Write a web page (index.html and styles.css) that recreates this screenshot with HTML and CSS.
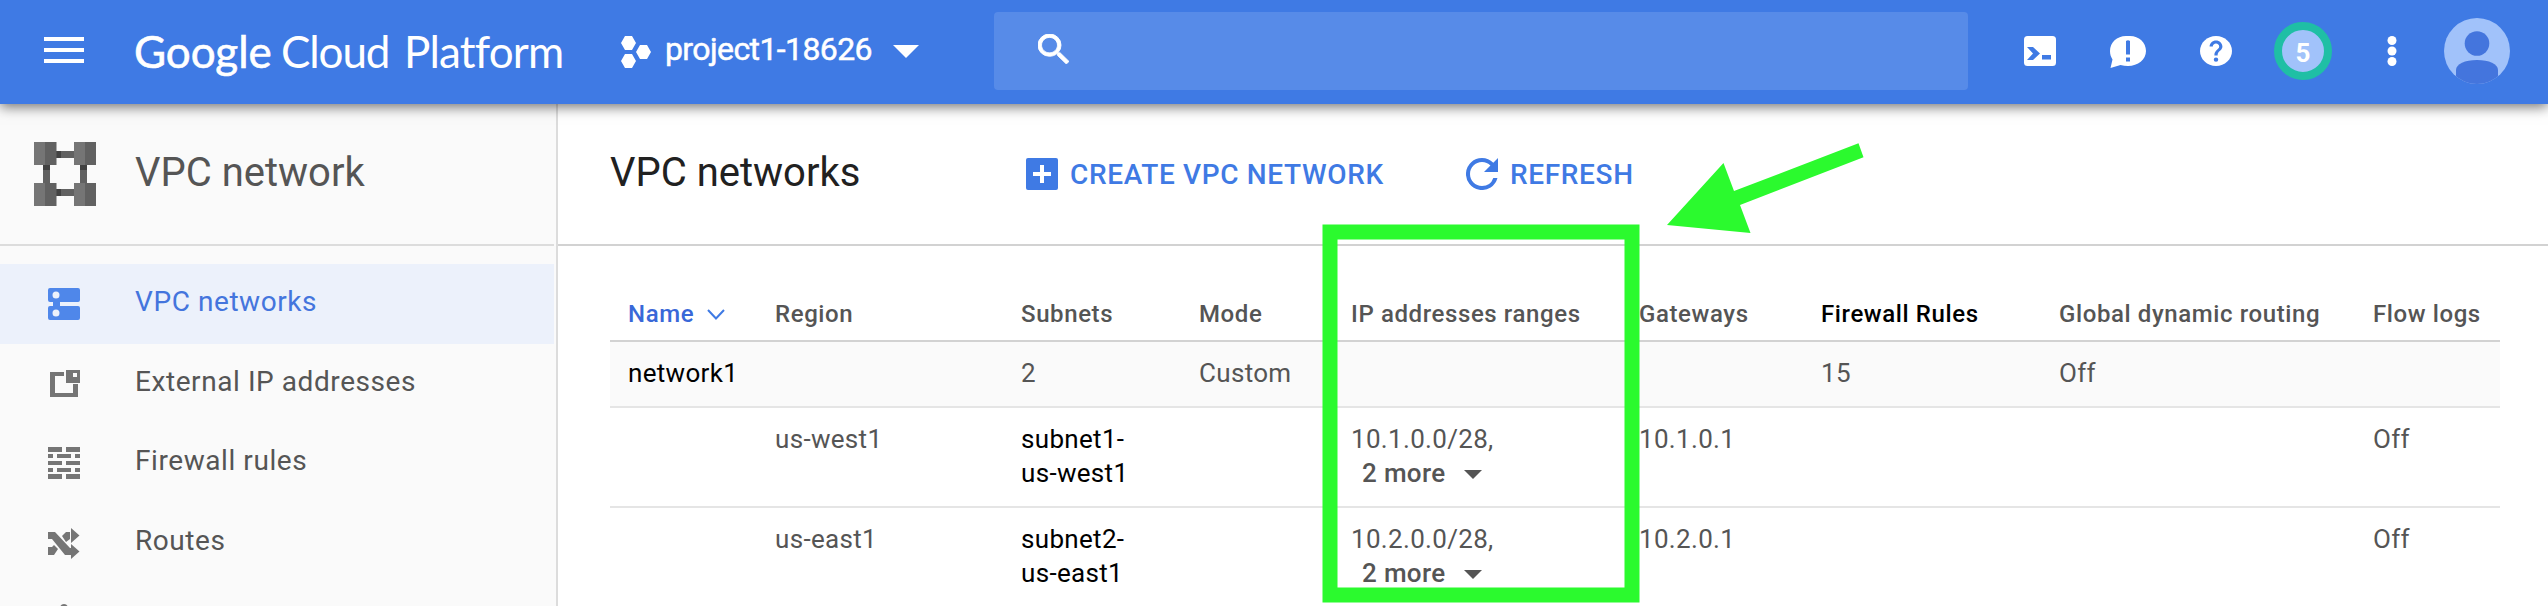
FILE: index.html
```
<!DOCTYPE html>
<html lang="en">
<head>
<meta charset="utf-8">
<title>VPC networks</title>
<link rel="stylesheet" href="styles.css">
</head>
<body>
<header class="topbar">
  <svg class="menu" viewBox="0 0 40 26"><path fill="#fff" d="M0 0h40v4H0zM0 11h40v4H0zM0 22h40v4H0z"/></svg>
  <div class="logo"><span class="logo-google">Google</span><span class="logo-cloud">Cloud</span><span class="logo-platform">Platform</span></div>
  <div class="project">
    <svg class="hexes" viewBox="0 0 30 32"><path fill="#fff" d="M4 0h7l4 7-4 7H4L0 7zM4 18h7l4 7-4 7H4l-4-7zM19 9h7l4 7-4 7h-7l-4-7z"/></svg>
    <span class="project-name">project1-18626</span>
    <svg class="caret" viewBox="0 0 26 13"><path fill="#fff" d="M0 0h26L13 13z"/></svg>
  </div>
  <div class="search"><svg class="search-icon" viewBox="3 3 17.5 17.5" preserveAspectRatio="none"><path fill="#fff" stroke="#fff" stroke-width=".5" d="M15.5 14h-.79l-.28-.27A6.471 6.471 0 0 0 16 9.5 6.5 6.5 0 1 0 9.500 16c1.610 0 3.090-.59 4.230-1.570l.27.28v.79l5 4.990L20.490 19l-4.990-5zm-6 0C7.010 14 5 11.990 5 9.500S7.010 5 9.500 5 14 7.010 14 9.500 11.990 14 9.500 14z"/></svg></div>
  <div class="tools">
    <svg class="t-shell" viewBox="0 0 32 30"><rect width="32" height="30" rx="3.500" fill="#fff"/><path fill="#3f7ae4" d="M3 11h6l7 6.500L9 24H3l6-6.500zM18 19h9v4.500h-9z"/></svg>
    <svg class="t-chat" viewBox="0 0 36 32"><path fill="#fff" d="M20 0h-4C7 0 0 6.500 0 15c0 3.500 1 6 2.500 8.500L.5 32l10-3c2.500.7 5 1 7.500 1 10 0 18-6.500 18-15S29 0 20 0z"/><path fill="#3f7ae4" d="M16 5q2-1.500 4 0v13.500h-4zM16 21.500h4v4h-4z"/></svg>
    <svg class="t-help" viewBox="2 2 20 20" preserveAspectRatio="none"><path fill="#fff" d="M12 2C6.480 2 2 6.480 2 12s4.480 10 10 10 10-4.480 10-10S17.520 2 12 2z"/><path fill="#3f7ae4" d="M15.070 11.250l-.9.920C13.450 12.900 13 13.500 13 15h-2v-.5c0-1.100.45-2.100 1.170-2.830l1.240-1.260c.37-.36.590-.86.590-1.410 0-1.100-.9-2-2-2s-2 .9-2 2H8c0-2.210 1.790-4 4-4s4 1.790 4 4c0 .88-.36 1.680-.93 2.250z"/><circle cx="12" cy="17.800" r="1.400" fill="#3f7ae4"/></svg>
    <span class="badge">5</span>
    <svg class="t-more" viewBox="0 0 10 30"><g fill="#fff"><circle cx="5" cy="4.500" r="4.500"/><circle cx="5" cy="15" r="4.500"/><circle cx="5" cy="25.500" r="4.500"/></g></svg>
    <svg class="avatar" viewBox="0 0 66 66"><clipPath id="disc"><circle cx="33" cy="33" r="33"/></clipPath><g clip-path="url(#disc)"><rect width="66" height="66" fill="#a1c2fa"/><circle cx="33" cy="25.500" r="12.300" fill="#4475dd"/><path fill="#4475dd" d="M12 66V52c0-6 9-10 21-10s21 4 21 10v14z"/></g></svg>
  </div>
</header>
<div class="body">
  <nav class="side">
    <div class="side-head">
      <svg class="vpc-icon" viewBox="0 0 62 64"><path fill="#616161" d="M22 9h18v7H22zM22 47h18v7H22zM9 22h7v20H9zM46 22h7v20h-7z"/><path fill="#424242" d="M22 9h5v7h-5zM22 47h5v7h-5zM9 22h7v6H9zM46 22h7v6h-7z"/><path fill="#757575" d="M0 0h11v23H0zM40 0h11v23H40zM0 41h11v23H0zM40 41h11v23H40z"/><path fill="#616161" d="M11 0h11.500v23H11zM51 0h11v23H51zM11 41h11.500v23H11zM51 41h11v23H51z"/></svg>
      <span>VPC network</span>
    </div>
    <div class="side-list">
      <a class="nav nav-on"><svg class="nav-icon" viewBox="0 0 32 32"><path fill="#4f87ea" fill-rule="evenodd" d="M2 0h28q2 0 2 2v10q0 2-2 2H12v4h18q2 0 2 2v10q0 2-2 2H2q-2 0-2-2V20q0-2 2-2h3v-4H2q-2 0-2-2V2q0-2 2-2zM8 3.500a3.500 3.500 0 1 0 0 7a3.500 3.500 0 1 0 0-7zM8 21.500a3.500 3.500 0 1 0 0 7a3.500 3.500 0 1 0 0-7z"/></svg><span>VPC networks</span></a>
      <a class="nav"><svg class="nav-icon" viewBox="0 0 32 32"><path fill="#757575" fill-rule="evenodd" d="M2 4h14v4H7v17h18v-9h5v13H2zM18 2h14v13H18zM25 5v4h4V5z"/></svg><span>External IP addresses</span></a>
      <a class="nav"><svg class="nav-icon" viewBox="0 0 32 32"><path fill="#757575" d="M0 0h14v5H0zM18 0h14v5H18zM0 7h5v4H0zM9 7h14v4H9zM27 7h5v4h-5zM0 14h14v4H0zM18 14h14v4H18zM0 21h5v4H0zM9 21h14v4H9zM27 21h5v4h-5zM0 27h14v5H0zM18 27h14v5H18z"/></svg><span>Firewall rules</span></a>
      <a class="nav"><svg class="nav-icon" viewBox="0 0 32 32"><path fill="#757575" d="M0 5h7l15 16h1v-4l8.500 7.500L23 32v-4h-6L4 12H0zM0 20h4l2-2 4 4-4 6H0zM14 9l4-4h4v7l-4 3zM23 1l8.500 7.500L23 16z"/></svg><span>Routes</span></a>
      <a class="nav"><svg class="nav-icon peering" viewBox="0 0 32 32"><path fill="#757575" d="M16 0q3 0 4 3v11l8 8v6h-6l-6-6-6 6H4v-6l8-8V3q1-3 4-3z"/></svg></a>
    </div>
  </nav>
  <main class="main">
    <div class="main-head">
      <h1>VPC networks</h1>
      <a class="action create"><svg class="act-icon" viewBox="0 0 32 32"><rect width="32" height="32" rx="2" fill="#3f7ae4"/><path fill="#fff" d="M14 7h4v7h7v4h-7v7h-4v-7H7v-4h7z"/></svg><span>CREATE VPC NETWORK</span></a>
      <a class="action refresh"><svg class="act-icon" viewBox="4 4 16 16"><path fill="#3f7ae4" d="M17.650 6.350A7.958 7.958 0 0 0 12 4a8 8 0 1 0 7.730 10h-2.080A5.990 5.990 0 0 1 12 18c-3.310 0-6-2.690-6-6s2.690-6 6-6c1.660 0 3.140.69 4.220 1.780L13 11h7V4l-2.350 2.350z"/></svg><span>REFRESH</span></a>
    </div>
    <div class="table">
      <div class="row head">
        <span class="sorted">Name<svg class="chev" viewBox="0 0 18 11"><path fill="none" stroke="#3f7ae4" stroke-width="2" d="M1 1l8 8.500L17 1"/></svg></span><span>Region</span><span>Subnets</span><span>Mode</span><span>IP addresses ranges</span><span>Gateways</span><span class="strong">Firewall Rules</span><span>Global dynamic routing</span><span>Flow logs</span>
      </div>
      <div class="row net">
        <span class="strong">network1</span><span></span><span>2</span><span>Custom</span><span></span><span></span><span>15</span><span>Off</span><span></span>
      </div>
      <div class="row sub">
        <span></span><span>us-west1</span><span class="strong">subnet1-<br>us-west1</span><span></span><span>10.1.0.0/28,<br><b class="more">2 more<svg class="drop" viewBox="0 0 18 9"><path fill="#555" d="M0 0h18L9 9z"/></svg></b></span><span>10.1.0.1</span><span></span><span></span><span>Off</span>
      </div>
      <div class="row sub last">
        <span></span><span>us-east1</span><span class="strong">subnet2-<br>us-east1</span><span></span><span>10.2.0.0/28,<br><b class="more">2 more<svg class="drop" viewBox="0 0 18 9"><path fill="#555" d="M0 0h18L9 9z"/></svg></b></span><span>10.2.0.1</span><span></span><span></span><span>Off</span>
      </div>
    </div>
  </main>
</div>
<svg class="callout" viewBox="0 0 2548 606"><path fill="none" stroke="#2bfa2e" stroke-width="15" d="M1330 232h302v363h-302z"/><path fill="#2bfa2e" d="M1667 225l56.500-62 10.500 28 124.500-47.700 5 14L1740 205l10.500 28z"/></svg>
</body>
</html>
```
FILE: styles.css
```
* { box-sizing: border-box; }
body { margin: 0; width: 2548px; height: 606px; overflow: hidden; position: relative; background: #fff; color: #555; font-family: Roboto, "Liberation Sans", sans-serif; display: flex; flex-direction: column; }
svg { display: block; flex: none; }

.topbar { position: relative; z-index: 2; height: 104px; flex: none; background: #3f7ae4; color: #fff; display: flex; align-items: flex-start; box-shadow: 0 3px 12px rgba(0,0,0,.55); }
.menu { width: 40px; height: 26px; margin: 37px 0 0 44px; }
.logo { width: 440px; margin: 25px 0 0 50px; display: flex; font: 44px/52px Lato, sans-serif; white-space: nowrap; }
.logo-google { width: 147px; -webkit-text-stroke: .6px #fff; letter-spacing: -.1px; }
.logo-cloud { width: 123px; letter-spacing: -1.1px; }
.logo-platform { letter-spacing: -.8px; }
.project { width: 373px; margin-left: 47px; display: flex; }
.hexes { width: 30px; height: 32px; margin-top: 36px; }
.project-name { width: 242px; padding-left: 14px; font-size: 32px; line-height: 38px; margin-top: 30px; letter-spacing: -.6px; -webkit-text-stroke: .5px #fff; white-space: nowrap; }
.caret { width: 26px; height: 13px; margin-top: 45px; }
.search { width: 974px; height: 78px; margin-top: 12px; border-radius: 4px; background: #578be8; padding: 22px 0 0 44px; }
.search-icon { width: 31px; height: 30px; }
.tools { display: flex; padding-left: 56px; }
.t-shell { width: 32px; height: 30px; margin-top: 36px; }
.t-chat { width: 36px; height: 32px; margin: 36px 0 0 54px; }
.t-help { width: 32px; height: 30px; margin: 36px 0 0 54px; }
.badge { width: 58px; height: 58px; margin: 22px 0 0 42px; border: 8px solid #1fbfa5; border-radius: 50%; background: #a1c2fa; font-size: 26px; line-height: 46px; font-weight: 700; text-align: center; }
.t-more { width: 10px; height: 30px; margin: 36px 0 0 55px; }
.avatar { width: 66px; height: 66px; margin: 18px 0 0 47px; }

.body { display: flex; height: 502px; overflow: hidden; }
.side { width: 558px; background: #fafafa; border-right: 2px solid #dcdcdc; flex: none; overflow: hidden; }
.side-head { width: 554px; height: 142px; border-bottom: 2px solid #dcdcdc; padding: 38px 0 0 34px; display: flex; font-size: 40px; line-height: 46px; }
.side-head span { padding-left: 39px; margin-top: 8px; }
.vpc-icon { width: 62px; height: 64px; }
.side-list { padding-top: 18px; height: 360px; overflow: hidden; }
.nav { width: 554px; height: 79.300px; display: flex; padding-left: 48px; align-items: flex-start; font-size: 28px; line-height: 34px; letter-spacing: .57px; }
.nav span { padding-left: 55px; margin-top: 21px; }
.nav-icon { width: 32px; height: 32px; margin-top: 24px; }
.peering { margin-top: 22px; }
.nav-on { height: 80px; background: #ecf1fb; color: #4475dd; }

.main { flex: 1; height: 502px; overflow: hidden; }
.main-head { height: 142px; border-bottom: 2px solid #d2d2d2; padding: 38px 0 0 52px; display: flex; }
h1 { margin: 8px 0 0; width: 416px; font-size: 40px; line-height: 46px; font-weight: 400; color: #212121; }
.action { display: flex; color: #3f7ae4; font-weight: 500; font-size: 28px; line-height: 34px; white-space: nowrap; padding-top: 16px; letter-spacing: .65px; }
.action span { padding-left: 12px; }
.create { width: 440px; }
.act-icon { width: 32px; height: 32px; }
.table { margin-left: 52px; width: 1890px; }
.row { display: grid; grid-template-columns: 147px 246px 178px 152px 288px 182px 238px 314px 127px; padding-left: 18px; white-space: nowrap; letter-spacing: .32px; }
.head { height: 96px; border-bottom: 2px solid #d2d2d2; font-size: 24px; line-height: 30px; font-weight: 500; padding-top: 53px; letter-spacing: .6px; }
.sorted { color: #3968d8; display: flex; }
.chev { width: 18px; height: 11px; margin: 10px 0 0 13px; }
.net, .sub { font-size: 26px; line-height: 34px; border-bottom: 2px solid #e5e5e5; }
.net { height: 66px; background: #fafafa; padding-top: 14px; }
.sub { height: 100px; padding-top: 14px; }
.last { height: 98px; border-bottom: 0; }
.strong { color: #000; }
.more { display: flex; padding-left: 11px; font-weight: 500; }
.drop { width: 18px; height: 9px; margin: 14px 0 0 19px; }
.callout { position: absolute; inset: 0; width: 2548px; height: 606px; z-index: 3; }
```
